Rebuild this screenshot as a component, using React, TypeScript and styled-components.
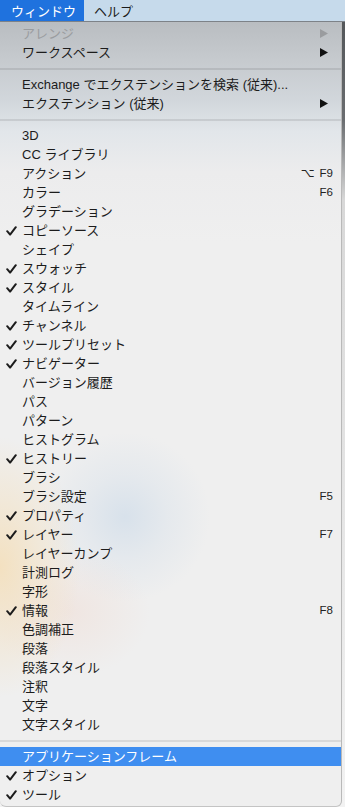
import React from "react";
import styled, { createGlobalStyle } from "styled-components";

const GlobalStyle = createGlobalStyle`
  html, body {
    margin: 0;
    padding: 0;
  }
  body {
    background: linear-gradient(to bottom, #4f5255 0px, #6a6d70 120px, #d8d8d8 200px, #f2f2f2 100%);
    font-family: "Liberation Sans", "Noto Sans CJK JP", sans-serif;
    -webkit-font-smoothing: antialiased;
  }
`;

const Screen = styled.div`
  width: 345px;
  height: 807px;
  display: flex;
  flex-direction: column;
  overflow: hidden;
`;

const MenuBar = styled.div`
  height: 21px;
  flex: 0 0 21px;
  display: flex;
  align-items: stretch;
  background: #c6daeb;
  border-bottom: 1px solid #7d8288;
`;

const MenuBarItem = styled.div<{ $active?: boolean }>`
  display: flex;
  align-items: center;
  padding: ${(p) => (p.$active ? "0 8px 0 11px" : "0 10px")};
  font-size: 13px;
  white-space: nowrap;
  color: ${(p) => (p.$active ? "#ffffff" : "#1a1a1a")};
  background: ${(p) => (p.$active ? "#1f72de" : "transparent")};
`;

const Menu = styled.div`
  width: 342px;
  box-sizing: border-box;
  flex: 0 0 auto;
  padding: 2px 0 2px 0;
  border-right: 1px solid #b9b9b9;
  border-bottom: 1px solid #c4c4c4;
  border-radius: 0 0 6px 6px;
  background:
    radial-gradient(ellipse 80px 130px at 0px 545px, rgba(244, 222, 184, 0.85), rgba(244, 222, 184, 0.45) 45%, rgba(244, 222, 184, 0) 100%),
    radial-gradient(ellipse 80px 65px at 70px 590px, rgba(240, 218, 208, 0.45), rgba(240, 218, 208, 0) 100%),
    radial-gradient(ellipse 85px 85px at 125px 495px, rgba(200, 216, 232, 0.6), rgba(200, 216, 232, 0.25) 50%, rgba(200, 216, 232, 0) 100%),
    linear-gradient(to bottom, #b9bdc1 0px, #c5c9cd 35px, #d2d7dc 80px, #e2e6ea 110px, #ececed 150px, #efefef 220px, #efefef 100%);
`;

const Row = styled.div<{ $highlight?: boolean; $disabled?: boolean }>`
  height: 19px;
  display: grid;
  grid-template-columns: 22px 1fr auto;
  align-items: center;
  padding-right: 8px;
  font-size: 13px;
  line-height: 19px;
  white-space: nowrap;
  color: ${(p) => (p.$highlight ? "#ffffff" : p.$disabled ? "#9a9c9f" : "#1c1c1c")};
  background: ${(p) => (p.$highlight ? "#3f8ef0" : "transparent")};
`;

const CheckCell = styled.span`
  display: flex;
  align-items: center;
  justify-content: flex-end;
  padding-right: 5px;
`;

const Label = styled.span``;

const Shortcut = styled.span`
  display: flex;
  align-items: center;
  gap: 5px;
  font-size: 11.5px;
  color: #222222;
`;

const OptKey = styled.span`
  font-family: "DejaVu Sans", sans-serif;
  font-size: 12px;
`;

const Arrow = styled.svg<{ $disabled?: boolean }>`
  width: 8px;
  height: 9px;
  margin-right: 5px;
  fill: ${(p) => (p.$disabled ? "#9a9c9f" : "#111111")};
`;

const Separator = styled.div`
  height: 13px;
  display: flex;
  align-items: center;
  &::after {
    content: "";
    display: block;
    width: 100%;
    height: 2px;
    background: rgba(0, 0, 0, 0.09);
  }
`;

const Check = () => (
  <svg width="11" height="10" viewBox="0 0 11 10">
    <path d="M1.2 5.2 L4.1 8.6 L9.8 1.2" fill="none" stroke="#1c1c1c" strokeWidth="2" strokeLinecap="round" strokeLinejoin="round" />
  </svg>
);

type Item =
  | { type: "sep" }
  | {
      type?: "item";
      label: string;
      checked?: boolean;
      disabled?: boolean;
      submenu?: boolean;
      shortcut?: string;
      opt?: boolean;
      highlight?: boolean;
    };

const items: Item[] = [
  { label: "アレンジ", disabled: true, submenu: true },
  { label: "ワークスペース", submenu: true },
  { type: "sep" },
  { label: "Exchange でエクステンションを検索 (従来)..." },
  { label: "エクステンション (従来)", submenu: true },
  { type: "sep" },
  { label: "3D" },
  { label: "CC ライブラリ" },
  { label: "アクション", shortcut: "F9", opt: true },
  { label: "カラー", shortcut: "F6" },
  { label: "グラデーション" },
  { label: "コピーソース", checked: true },
  { label: "シェイプ" },
  { label: "スウォッチ", checked: true },
  { label: "スタイル", checked: true },
  { label: "タイムライン" },
  { label: "チャンネル", checked: true },
  { label: "ツールプリセット", checked: true },
  { label: "ナビゲーター", checked: true },
  { label: "バージョン履歴" },
  { label: "パス" },
  { label: "パターン" },
  { label: "ヒストグラム" },
  { label: "ヒストリー", checked: true },
  { label: "ブラシ" },
  { label: "ブラシ設定", shortcut: "F5" },
  { label: "プロパティ", checked: true },
  { label: "レイヤー", checked: true, shortcut: "F7" },
  { label: "レイヤーカンプ" },
  { label: "計測ログ" },
  { label: "字形" },
  { label: "情報", checked: true, shortcut: "F8" },
  { label: "色調補正" },
  { label: "段落" },
  { label: "段落スタイル" },
  { label: "注釈" },
  { label: "文字" },
  { label: "文字スタイル" },
  { type: "sep" },
  { label: "アプリケーションフレーム", highlight: true },
  { label: "オプション", checked: true },
  { label: "ツール", checked: true },
];

export default function App() {
  return (
    <>
      <GlobalStyle />
      <Screen>
        <MenuBar>
          <MenuBarItem $active>ウィンドウ</MenuBarItem>
          <MenuBarItem>ヘルプ</MenuBarItem>
        </MenuBar>
        <Menu>
          {items.map((it, i) => {
            if (it.type === "sep") return <Separator key={i} />;
            return (
              <Row key={i} $highlight={it.highlight} $disabled={it.disabled}>
                <CheckCell>{it.checked ? <Check /> : null}</CheckCell>
                <Label>{it.label}</Label>
                {it.submenu ? (
                  <Arrow $disabled={it.disabled} viewBox="0 0 8 9">
                    <path d="M0 0 L8 4.5 L0 9 Z" />
                  </Arrow>
                ) : it.shortcut ? (
                  <Shortcut>
                    {it.opt ? <OptKey>⌥</OptKey> : null}
                    {it.shortcut}
                  </Shortcut>
                ) : (
                  <span />
                )}
              </Row>
            );
          })}
        </Menu>
      </Screen>
    </>
  );
}
